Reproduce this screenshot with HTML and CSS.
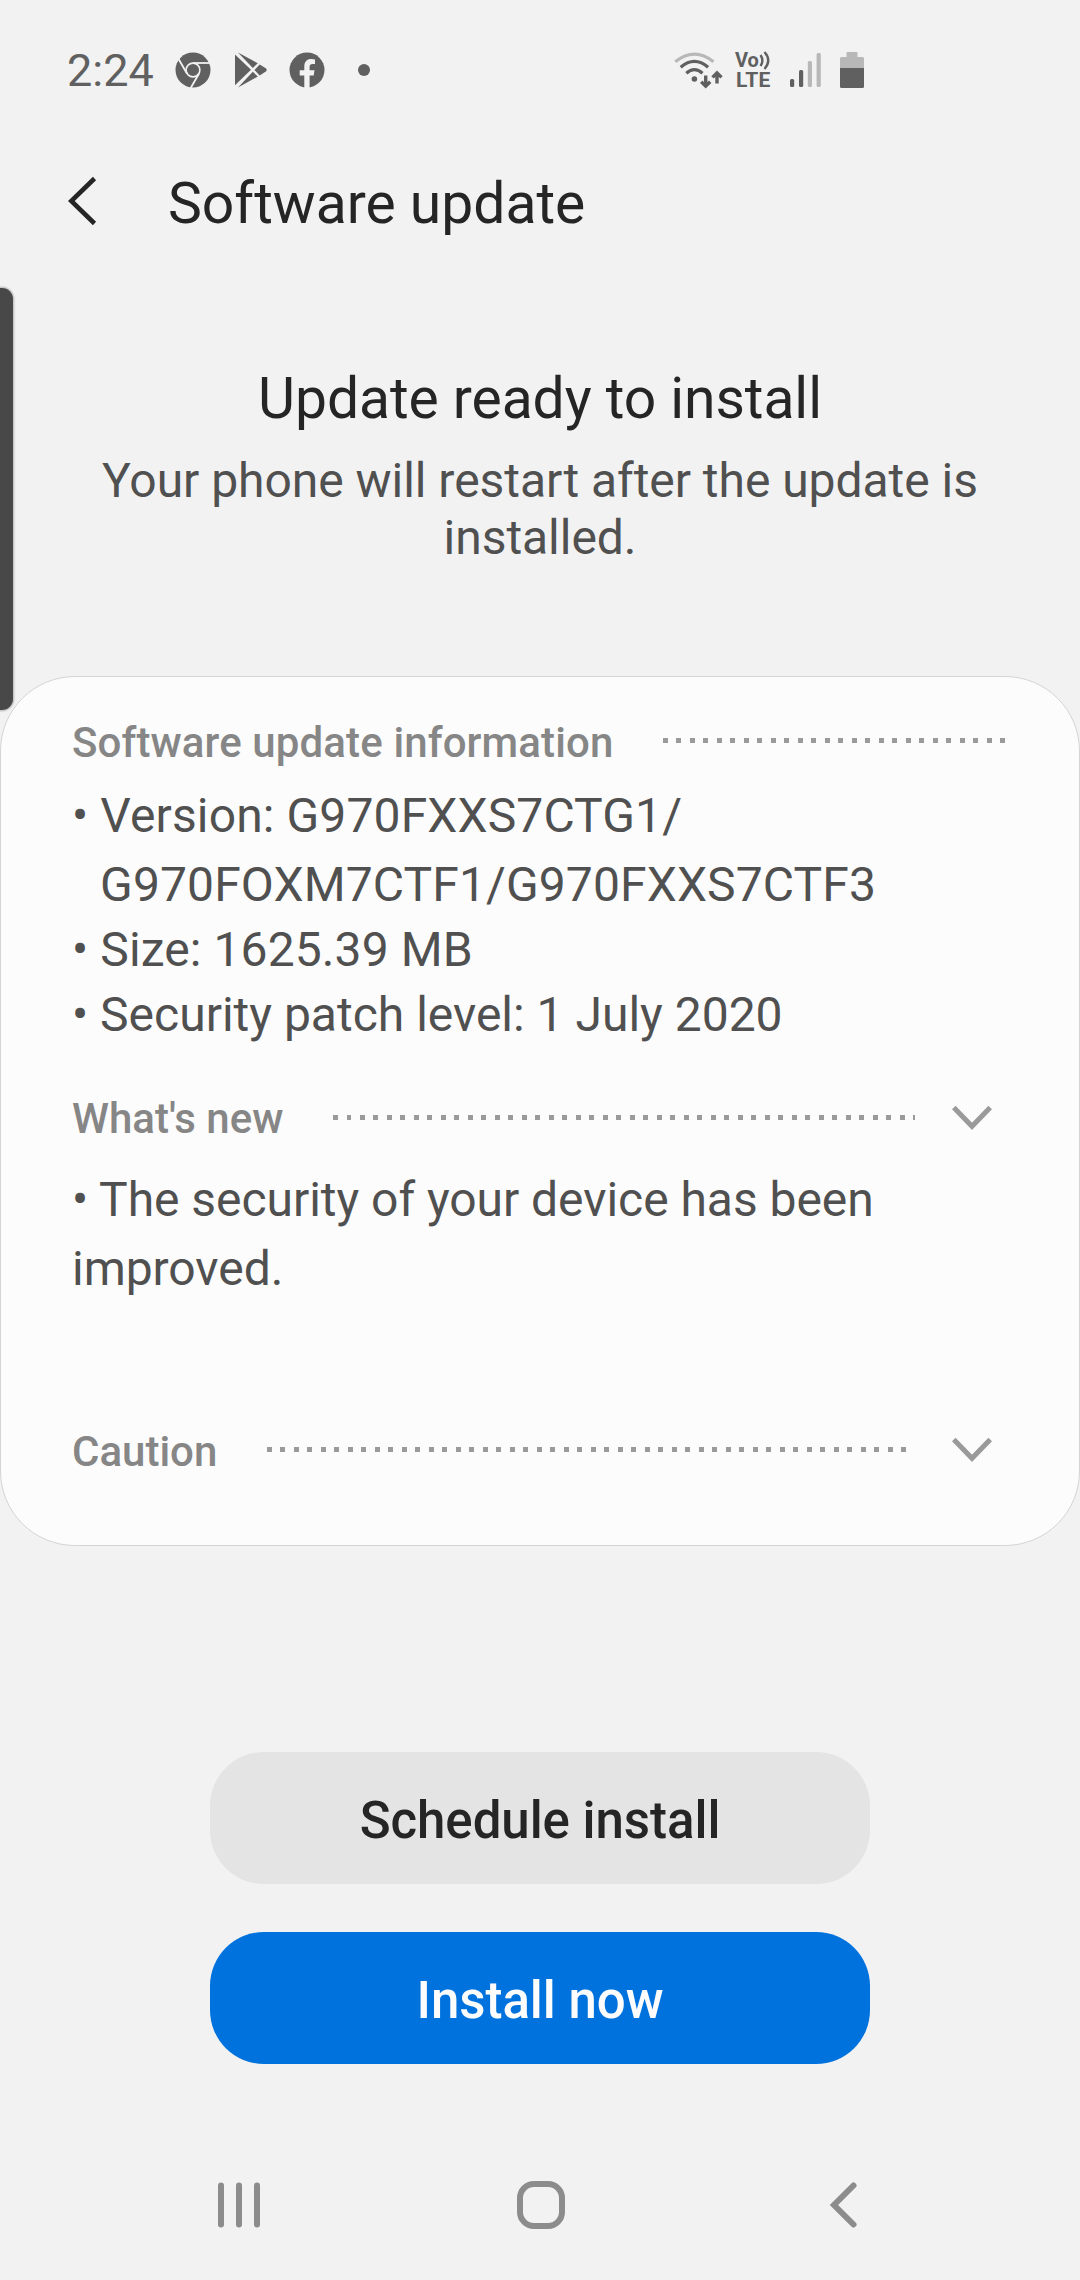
FILE: index.html
```html
<!DOCTYPE html>
<html lang="en">
<head>
<meta charset="utf-8">
<title>Software update</title>
<link rel="stylesheet" href="styles.css">
</head>
<body>
<div class="screen">
  <div class="status">
    <div class="status-left">
      <span class="clock">2:24</span>
      <svg class="chrome" width="36" height="36" viewBox="-18 -18 36 36">
        <circle r="17.5" fill="#606060"/>
        <circle r="6.9" fill="none" stroke="#f2f2f2" stroke-width="1.6"/>
        <g stroke="#f2f2f2" stroke-width="1.8" fill="none">
          <path d="M0-7H17"/>
          <path d="M0-7H17" transform="rotate(120)"/>
          <path d="M0-7H17" transform="rotate(240)"/>
        </g>
      </svg>
      <svg class="play" width="32" height="36" viewBox="0 0 32 36">
        <g fill="#606060">
          <path d="M0 2.6L16 17.800L0 33.300Z"/>
          <path d="M3 .4L22.800 11.200L17.800 16Z"/>
          <path d="M3 35.600L17.800 19.700L22.800 24.600Z"/>
          <path d="M24.700 12.400L30.800 16.200Q32.600 17.900 30.800 19.600L24.700 23.400L19.500 17.900Z"/>
        </g>
      </svg>
      <svg class="facebook" width="36" height="36" viewBox="-18 -18 36 36">
        <circle r="17.500" fill="#606060"/>
        <path d="M-2.700 18V5.500H-7.300V.3H-2.700V-3.500C-2.700-8.500 0-11 4.300-11Q6.500-11 8-10.600V-6H5.500Q2.600-6 2.600-3.200V.3H7.500L6.700 5.500H2.600V18Z" fill="#f2f2f2"/>
      </svg>
      <span class="more-dot"></span>
    </div>
    <div class="status-right">
      <svg class="wifi" width="50" height="38" viewBox="14 20 50 38" fill="none">
        <g stroke-width="3.200">
          <path d="M15.300 30.800Q34.400 15.500 53.500 30.800" stroke="#b8b8b8"/>
          <g stroke="#606060">
            <path d="M20.700 36.300Q34.400 24.600 48.100 36.300"/>
            <path d="M26.300 42.300Q34.400 34.900 42.500 42.300"/>
          </g>
        </g>
        <circle cx="34.400" cy="48" r="2.800" fill="#606060"/>
        <g stroke="#606060" stroke-width="3.400">
          <path d="M45.700 44.500V54M41.200 50.700L45.700 55.200L50.200 50.700"/>
          <path d="M57 52.500V43M52.500 46.400L57 41.900L61.500 46.400"/>
        </g>
      </svg>
      <span class="volte">
        <span class="vo">Vo<svg width="11" height="20" viewBox="0 0 11 20" fill="none" stroke="#606060" stroke-width="2.400"><path d="M1.500 5Q5.300 10.500 1.500 16M5.500 2Q13 10.500 5.500 19"/></svg></span>
        <span class="lte">LTE</span>
      </span>
      <svg class="signal" width="32" height="36" viewBox="0 0 32 36">
        <rect x="0" y="27" width="4.200" height="8" rx="1.500" fill="#606060"/>
        <rect x="9" y="18" width="4.200" height="17" rx="1.500" fill="#606060"/>
        <rect x="17.800" y="9" width="4.200" height="26" rx="1.500" fill="#b8b8b8"/>
        <rect x="26.600" y="1" width="4.200" height="34" rx="1.500" fill="#b8b8b8"/>
      </svg>
      <svg class="battery" width="24" height="36" viewBox="0 0 24 36">
        <path d="M6.500 5V1Q6.500 0 7.500 0H16.500Q17.500 0 17.500 1V5H22.500Q24 5 24 6.500V16H0V6.500Q0 5 1.500 5Z" fill="#b8b8b8"/>
        <path d="M0 16H24V34.500Q24 36 22.500 36H1.500Q0 36 0 34.500Z" fill="#606060"/>
      </svg>
    </div>
  </div>

  <header class="header">
    <svg width="30" height="50" viewBox="0 0 30 50" fill="none" stroke="#252525" stroke-width="4.600"><path d="M27.500 2.500L4.300 25L27.500 47.500"/></svg>
    <h1>Software update</h1>
  </header>

  <section class="hero">
    <h2>Update ready to install</h2>
    <p>Your phone will restart after the update is installed.</p>
  </section>

  <main class="card">
    <div class="row row-info">
      <h3>Software update information</h3>
      <span class="dots"></span>
    </div>
    <ul class="info">
      <li class="version">• Version: G970FXXS7CTG1/<br>G970FOXM7CTF1/G970FXXS7CTF3</li>
      <li class="size">• Size: 1625.39 MB</li>
      <li>• Security patch level: 1 July 2020</li>
    </ul>
    <div class="row row-new">
      <h3>What's new</h3>
      <span class="dots"></span>
      <svg class="chevron" width="42" height="26" viewBox="0 0 42 26" fill="none" stroke="#9a9a9a" stroke-width="5"><path d="M2.800 2.500L21 21.300L39.200 2.500"/></svg>
    </div>
    <p class="news">• The security of your device has been improved.</p>
    <div class="row row-caution">
      <h3>Caution</h3>
      <span class="dots"></span>
      <svg class="chevron" width="42" height="26" viewBox="0 0 42 26" fill="none" stroke="#9a9a9a" stroke-width="5"><path d="M2.800 2.500L21 21.300L39.200 2.500"/></svg>
    </div>
  </main>

  <div class="actions">
    <button class="btn">Schedule install</button>
    <button class="btn btn-primary">Install now</button>
  </div>

  <nav class="nav">
    <svg width="48" height="48" viewBox="0 0 48 48" fill="#8c8c8c">
      <rect x="3" y="1.500" width="6" height="45" rx="3"/>
      <rect x="21" y="1.500" width="6" height="45" rx="3"/>
      <rect x="39" y="1.500" width="6" height="45" rx="3"/>
    </svg>
    <svg width="48" height="48" viewBox="0 0 48 48" fill="none" stroke="#8c8c8c" stroke-width="6"><rect x="3" y="3" width="42" height="42" rx="14"/></svg>
    <svg width="48" height="48" viewBox="0 0 48 48" fill="none" stroke="#8c8c8c" stroke-width="6" stroke-linecap="round"><path d="M34.500 4.500L15 24L34.500 43.500"/></svg>
  </nav>

  <div class="edge-handle"></div>
</div>
</body>
</html>
```
FILE: styles.css
```css
* { box-sizing: border-box; margin: 0; padding: 0; }

body {
  background: #f2f2f2;
  font-family: Roboto, "Noto Sans", sans-serif;
  color: #505050;
}

svg { display: block; flex: none; }

.screen {
  position: relative;
  display: flex;
  flex-direction: column;
  width: 1080px;
  height: 2280px;
  overflow: hidden;
}

h1, h2 { font-size: 57px; font-weight: 400; color: #252525; }

/* Status bar */
.status {
  display: flex;
  justify-content: space-between;
  height: 139px;
  padding: 0 216px 0 67px;
}
.status-left, .status-right { display: flex; align-items: center; }
.clock { width: 108px; padding-top: 3px; font-size: 45px; line-height: 52px; color: #606060; }
.play { margin-left: 24px; }
.facebook { margin-left: 22px; }
.more-dot { width: 12px; height: 12px; margin-left: 33px; border-radius: 50%; background: #606060; }
.wifi { margin-right: 11px; }
.volte {
  display: flex;
  flex-direction: column;
  width: 55px;
  font-size: 21px;
  font-weight: 700;
  line-height: 20px;
  color: #606060;
}
.vo { display: flex; align-items: center; font-size: 20px; }
.lte { padding-left: 1px; letter-spacing: 0.2px; }
.signal { margin-right: 18px; }

/* Title bar */
.header { display: flex; align-items: center; gap: 71px; height: 124px; padding-left: 67px; }
.header h1 { padding-top: 6px; line-height: 64px; }

/* Headline */
.hero { padding: 100px 90px 0; text-align: center; }
.hero h2 { line-height: 72px; letter-spacing: -0.06px; }
.hero p { margin-top: 17px; font-size: 48px; line-height: 57px; letter-spacing: -0.04px; }

/* Information card */
.card {
  height: 870px;
  margin-top: 110px;
  padding: 40px 71px 0;
  border: 1px solid #d4d4d4;
  border-radius: 75px;
  background: #fcfcfc;
}
.row { display: flex; align-items: center; height: 50px; }
.row h3 { font-size: 42px; font-weight: 500; line-height: 50px; color: #868686; white-space: nowrap; }
.row-info h3 { padding-top: 1px; letter-spacing: 0.12px; }
.dots {
  flex: 1;
  height: 5px;
  margin: 0 0 4px 50px;
  background: repeating-linear-gradient(to right, #9a9a9a 0 5px, transparent 5px 13.5px);
}
.chevron { margin: 0 15px 2px 36px; }
.info { margin-top: 14px; list-style: none; }
.info li { padding-left: 28.1px; text-indent: -28.1px; font-size: 48px; line-height: 65px; }
.info .version { margin-bottom: -2px; line-height: 69px; letter-spacing: 0.12px; }
.info .size { letter-spacing: 0.1px; }
.row-new { margin-top: 47px; }
.news { margin-top: 21px; font-size: 48px; line-height: 69px; letter-spacing: -0.04px; }
.row-caution { margin-top: 123px; }
.row-caution h3 { padding-top: 1px; }
.row-caution .chevron { margin-left: 44px; }

/* Buttons */
.actions { display: flex; flex-direction: column; align-items: center; gap: 48px; margin-top: 206px; }
.btn {
  width: 660px;
  height: 132px;
  padding-top: 4px;
  border: 0;
  border-radius: 54px;
  background: #e4e4e4;
  font: 500 51px Roboto, "Noto Sans", sans-serif;
  letter-spacing: -0.04px;
  color: #252525;
}
.btn-primary { background: #0072de; color: #fcfcfc; }

/* Navigation bar */
.nav {
  display: flex;
  align-items: center;
  justify-content: space-between;
  height: 150px;
  margin-top: 66px;
  padding: 0 213px 0 215px;
}

/* Edge panel handle lies over the page */
.edge-handle {
  position: absolute;
  left: 0;
  top: 288px;
  width: 13px;
  height: 422px;
  border-radius: 0 11px 11px 0;
  background: #484848;
  box-shadow: 0 0 1px 1.5px #c6c6c6;
}
```
